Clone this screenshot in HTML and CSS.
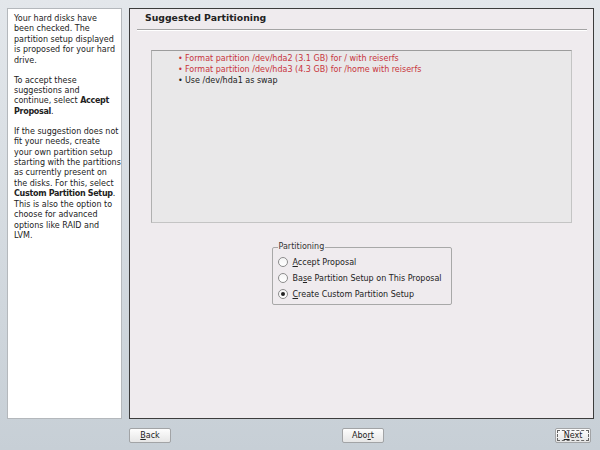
FILE: index.html
```html
<!DOCTYPE html>
<html lang="en">

<head>
  <meta charset="UTF-8">
  <title>Suggested Partitioning</title>
  <link rel="stylesheet" href="styles.css">
</head>

<body>
  <div class="wizard">
    <div class="top">
      <div class="help">
        <p>Your hard disks have<br>been checked. The<br>partition setup displayed<br>is proposed for your hard<br>drive.</p>
        <p>To accept these<br>suggestions and<br>continue, select <b>Accept<br>Proposal</b>.</p>
        <p>If the suggestion does not<br>fit your needs, create<br>your own partition setup<br>starting with the partitions<br>as currently present on<br>the disks. For this, select<br><b>Custom Partition Setup</b>.<br>This is also the option to<br>choose for advanced<br>options like RAID and<br>LVM.</p>
      </div>
      <div class="main">
        <div class="title">Suggested Partitioning</div>
        <div class="proposal">
          <ul>
            <li class="red">Format partition /dev/hda2 (3.1 GB) for / with reiserfs</li>
            <li class="red">Format partition /dev/hda3 (4.3 GB) for /home with reiserfs</li>
            <li>Use /dev/hda1 as swap</li>
          </ul>
        </div>
        <fieldset class="choices">
          <legend>Partitioning</legend>
          <div class="radio"><span class="dot"></span><span><u>A</u>ccept Proposal</span></div>
          <div class="radio"><span class="dot"></span><span>Ba<u>s</u>e Partition Setup on This Proposal</span></div>
          <div class="radio"><span class="dot on"></span><span><u>C</u>reate Custom Partition Setup</span></div>
        </fieldset>
      </div>
    </div>
    <div class="buttons">
      <button class="btn back"><u>B</u>ack</button>
      <button class="btn abort">Abo<u>r</u>t</button>
      <button class="btn next"><u>N</u>ext</button>
    </div>
  </div>
</body>

</html>
```

FILE: styles.css
```css
body {
  margin: 0;
  width: 600px;
  height: 450px;
  background: linear-gradient(#e3e7eb, #c7cfd6);
  font-family: 'DejaVu Sans', Verdana, sans-serif;
  font-size: 8px;
  color: #222;
  overflow: hidden;
}

.wizard {
  display: flex;
  flex-direction: column;
  padding: 8px 6px 0 7px;
}

.top {
  display: flex;
  gap: 7px;
  height: 411px;
}

/* help text, wrapped as in the installer */
.help {
  width: 115px;
  flex: none;
  box-sizing: border-box;
  background: #fff;
  border: 1px solid #b4b8bc;
  padding: 5px 1px 0 6px;
  line-height: 10.4px;
  white-space: nowrap;
  overflow: hidden;
}

.help p {
  margin: 0 0 9.6px;
}

.help b {
  letter-spacing: -0.3px;
}

.main {
  flex: 1;
  background: #efebee;
  border: 1px solid #3c3c3c;
  display: flex;
  flex-direction: column;
}

.title {
  margin: 0 6px 0 7px;
  padding: 3px 0 0 8px;
  height: 17px;
  font-weight: bold;
  font-size: 9.3px;
  line-height: 12px;
  border-bottom: 1px solid #a4a4a4;
  box-shadow: 0 1px 0 #fff;
}

/* proposal summary */
.proposal {
  margin: 20px 21px 0;
  height: 171px;
  background: #e9e8e9;
  border: 1px solid #c4c4c4;
  border-top-color: #9c9c9c;
  border-left-color: #b0b0b0;
}

.proposal ul {
  list-style: none;
  margin: 0;
  padding: 2px 0 0 26px;
  line-height: 11px;
}

.proposal li::before {
  content: "\2022";
  display: inline-block;
  width: 7px;
  color: #222;
}

.proposal li.red {
  color: #c8343c;
}

.proposal li.red::before {
  color: #c8343c;
}

.choices {
  align-self: center;
  width: 180px;
  box-sizing: border-box;
  margin: 19px 0 0;
  padding: 2px 5px 2px;
  border: 1px solid #a8a8a8;
  border-radius: 2px;
  min-width: 0;
}

.choices legend {
  padding: 0 1px;
  margin-left: 0;
  line-height: 10px;
  color: #333;
}

.radio {
  display: flex;
  align-items: center;
  height: 16px;
  gap: 5px;
  color: #222;
  white-space: nowrap;
}

.dot {
  flex: none;
  width: 8px;
  height: 8px;
  border-radius: 50%;
  border: 1px solid #8c8c8c;
  background: linear-gradient(#f4f4f4, #fff);
  display: flex;
  align-items: center;
  justify-content: center;
}

.dot.on::after {
  content: "";
  width: 4px;
  height: 4px;
  border-radius: 50%;
  background: #222;
}

/* bottom button row */
.buttons {
  display: flex;
  justify-content: space-between;
  align-items: center;
  margin: 9px 3px 0 122px;
}

.btn {
  height: 15px;
  padding: 0;
  font-family: inherit;
  font-size: 8px;
  color: #222;
  background: linear-gradient(#fdfdfd, #e6e6e6);
  border: 1px solid #a2a4a6;
  border-radius: 2px;
}

.back,
.abort {
  width: 42px;
}

.next {
  width: 36px;
  outline: 1px dashed #666;
  outline-offset: -3px;
}
```
